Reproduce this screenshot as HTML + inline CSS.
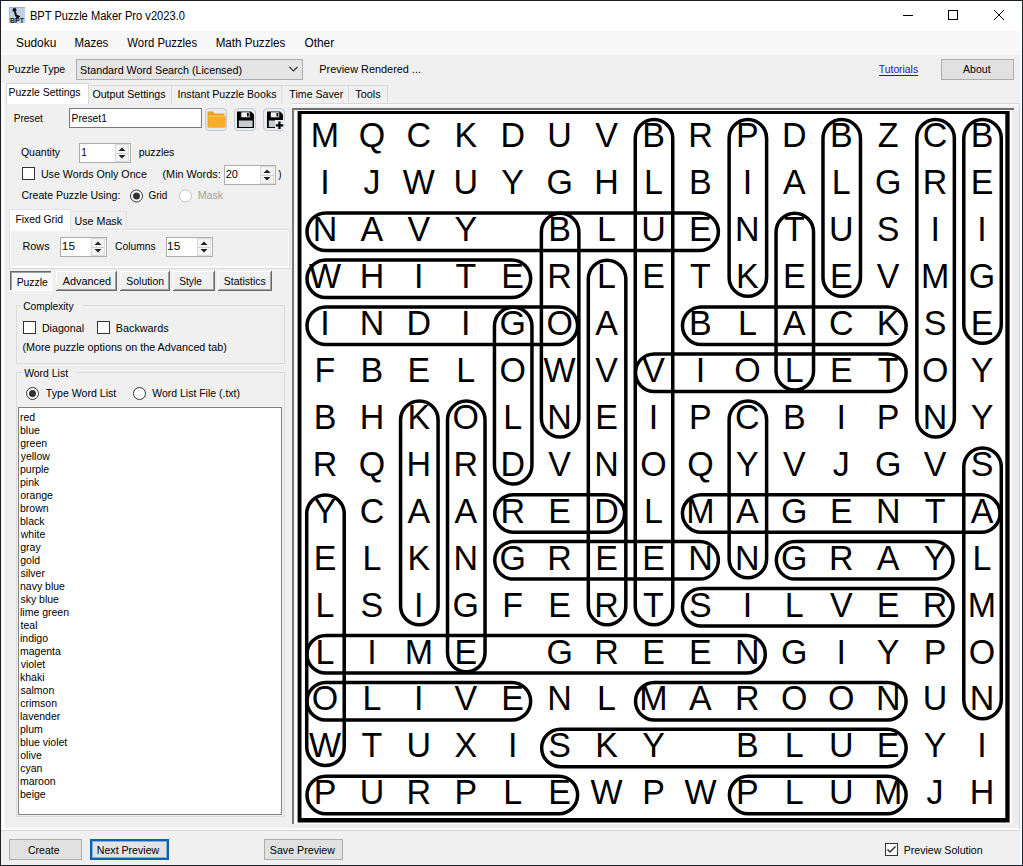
<!DOCTYPE html>
<html><head><meta charset="utf-8"><title>BPT Puzzle Maker Pro</title>
<style>
html,body{margin:0;padding:0;width:1023px;height:866px;overflow:hidden;background:#f0f0f0;}
svg{display:block;}
text{font-family:"Liberation Sans", sans-serif;}
</style></head><body>
<svg width="1023" height="866" viewBox="0 0 1023 866">
<rect x="0" y="0" width="1023" height="866" fill="#f0f0f0"/>
<rect x="0" y="0" width="1023" height="31" fill="#ffffff"/>
<rect x="9" y="7" width="16" height="16" fill="#c3cfe2"/>
<rect x="9" y="7" width="16" height="1" fill="#9fb0c9"/>
<rect x="9" y="7" width="1" height="16" fill="#a8b6cc"/>
<circle cx="14.5" cy="10" r="2" fill="#0c0f14"/>
<path d="M15 12 L16 15.5 L18.5 16.5 L16 19" stroke="#0c0f14" stroke-width="2" fill="none"/>
<text x="10" y="23" font-size="6.5" font-weight="bold" fill="#1a1f2a" textLength="14" lengthAdjust="spacingAndGlyphs">BPT</text>
<text x="29.89" y="19.6" font-size="12" fill="#000" textLength="155.05" lengthAdjust="spacingAndGlyphs">BPT Puzzle Maker Pro v2023.0</text>
<rect x="903" y="15" width="10" height="1" fill="#000"/>
<rect x="948" y="10" width="10" height="10" fill="#000"/>
<rect x="949" y="11" width="8" height="8" fill="#fff"/>
<line x1="994" y1="10" x2="1004" y2="20" stroke="#000" stroke-width="1"/>
<line x1="1004" y1="10" x2="994" y2="20" stroke="#000" stroke-width="1"/>
<rect x="1" y="31" width="1021" height="23" fill="#f7f7f7"/>
<rect x="1" y="53" width="1021" height="2" fill="#f9f9f9"/>
<text x="15.96" y="46.9" font-size="12" fill="#000" textLength="40.33" lengthAdjust="spacingAndGlyphs">Sudoku</text>
<text x="74.46" y="46.9" font-size="12" fill="#000" textLength="33.86" lengthAdjust="spacingAndGlyphs">Mazes</text>
<text x="127.34" y="46.9" font-size="12" fill="#000" textLength="69.78" lengthAdjust="spacingAndGlyphs">Word Puzzles</text>
<text x="215.65" y="46.9" font-size="12" fill="#000" textLength="69.68" lengthAdjust="spacingAndGlyphs">Math Puzzles</text>
<text x="304.45" y="46.9" font-size="12" fill="#000" textLength="29.64" lengthAdjust="spacingAndGlyphs">Other</text>
<text x="7.73" y="72.6" font-size="11" fill="#000" textLength="57.55" lengthAdjust="spacingAndGlyphs">Puzzle Type</text>
<rect x="76" y="59" width="227" height="21" fill="#adadad"/>
<rect x="77" y="60" width="225" height="19" fill="#e5e5e5"/>
<text x="80.11" y="73.5" font-size="11" fill="#000" textLength="161.86" lengthAdjust="spacingAndGlyphs">Standard Word Search (Licensed)</text>
<path d="M289.5 67 L293.5 71 L297.5 67" stroke="#333" stroke-width="1.2" fill="none"/>
<text x="319.31" y="72.6" font-size="11" fill="#000" textLength="101.68" lengthAdjust="spacingAndGlyphs">Preview Rendered ...</text>
<text x="878.87" y="73.4" font-size="11" fill="#1414c8" textLength="39.19" lengthAdjust="spacingAndGlyphs">Tutorials</text>
<rect x="879" y="75" width="39" height="1" fill="#1414c8"/>
<rect x="941" y="59" width="73" height="21" fill="#adadad"/>
<rect x="942" y="60" width="71" height="19" fill="#e1e1e1"/>
<text x="963.08" y="73.4" font-size="11" fill="#000" textLength="27.48" lengthAdjust="spacingAndGlyphs">About</text>
<rect x="6" y="103" width="287" height="1" fill="#d9d9d9"/>
<rect x="88" y="85" width="84" height="20" fill="#d9d9d9"/>
<rect x="89" y="86" width="82" height="18" fill="#f0f0f0"/>
<text x="92.40" y="98.3" font-size="11" fill="#000" textLength="73.19" lengthAdjust="spacingAndGlyphs">Output Settings</text>
<rect x="171" y="85" width="111" height="20" fill="#d9d9d9"/>
<rect x="172" y="86" width="109" height="18" fill="#f0f0f0"/>
<text x="177.52" y="98.3" font-size="11" fill="#000" textLength="98.97" lengthAdjust="spacingAndGlyphs">Instant Puzzle Books</text>
<rect x="281" y="85" width="68" height="20" fill="#d9d9d9"/>
<rect x="282" y="86" width="66" height="18" fill="#f0f0f0"/>
<text x="289.37" y="98.3" font-size="11" fill="#000" textLength="53.91" lengthAdjust="spacingAndGlyphs">Time Saver</text>
<rect x="348" y="85" width="40" height="20" fill="#d9d9d9"/>
<rect x="349" y="86" width="38" height="18" fill="#f0f0f0"/>
<text x="355.26" y="98.3" font-size="11" fill="#000" textLength="25.33" lengthAdjust="spacingAndGlyphs">Tools</text>
<rect x="6" y="83" width="83" height="22" fill="#d9d9d9"/>
<rect x="7" y="84" width="81" height="20" fill="#ffffff"/>
<rect x="7" y="103" width="81" height="2" fill="#ffffff"/>
<text x="8.54" y="96.3" font-size="11" fill="#000" textLength="72.03" lengthAdjust="spacingAndGlyphs">Puzzle Settings</text>
<rect x="6" y="104" width="1" height="724" fill="#e8e8e8"/>
<rect x="7" y="104" width="285" height="724" fill="#f0f0f0"/>
<rect x="1" y="83" width="4" height="746" fill="#fafafa"/>
<text x="13.67" y="121.5" font-size="11" fill="#000" textLength="29.19" lengthAdjust="spacingAndGlyphs">Preset</text>
<rect x="69" y="108" width="133" height="20" fill="#7a7a7a"/>
<rect x="70" y="109" width="131" height="18" fill="#ffffff"/>
<text x="71.56" y="121.5" font-size="11" fill="#000" textLength="35.33" lengthAdjust="spacingAndGlyphs">Preset1</text>
<rect x="205.5" y="108.5" width="21" height="22" rx="3.5" fill="#e9ecef" stroke="#c5cad0"/>
<path d="M207.5 111.5 h5.5 l1.5 2 h10 v14 h-17 z" fill="#f0a020"/>
<path d="M208.5 116 h17.5 l-0.5 11.5 h-17 z" fill="#f7ae2a"/>
<path d="M208.5 116 h17" stroke="#ffd27a" stroke-width="0.8"/>
<rect x="234.5" y="108.5" width="21" height="22" rx="3.5" fill="#e9ecef" stroke="#c5cad0"/>
<path d="M237 111.5 h14 l3 3 v13.5 h-17 z" fill="#000"/>
<rect x="241.3" y="112.3" width="8.4" height="5" fill="#f4f4f4"/>
<rect x="247" y="113" width="1.8" height="3.5" fill="#000"/>
<rect x="238.8" y="120.5" width="13.8" height="6.5" fill="#c9ccd0"/>
<rect x="263.5" y="108.5" width="21" height="22" rx="3.5" fill="#e9ecef" stroke="#c5cad0"/>
<path d="M267 111.5 h13 l3 3 v13.5 h-16 z" fill="#000"/>
<rect x="270.8" y="112.3" width="8.4" height="5" fill="#f4f4f4"/>
<rect x="276.5" y="113" width="1.8" height="3.5" fill="#000"/>
<rect x="268.8" y="120.5" width="12.8" height="6.5" fill="#c9ccd0"/>
<rect x="275" y="120" width="10" height="10" fill="#e9ecef"/>
<path d="M279.5 121.5 v7.5 M275.8 125.3 h7.5" stroke="#000" stroke-width="2.2"/>
<text x="20.90" y="156.2" font-size="11" fill="#000" textLength="39.22" lengthAdjust="spacingAndGlyphs">Quantity</text>
<rect x="79" y="143" width="52" height="20" fill="#adadad"/>
<rect x="80" y="144" width="50" height="18" fill="#ffffff"/>
<text x="81.32" y="156.2" font-size="11" fill="#000" textLength="5.68" lengthAdjust="spacingAndGlyphs">1</text>
<rect x="115" y="144" width="14" height="18" fill="#dadada"/>
<rect x="116" y="145" width="12" height="16" fill="#f4f4f4"/>
<rect x="116" y="153" width="12" height="1" fill="#cfcfcf"/>
<path d="M118.5 151 L122 147.5 L125.5 151 Z" fill="#222"/>
<path d="M118.5 155 L122 158.5 L125.5 155 Z" fill="#222"/>
<text x="138.63" y="156.2" font-size="11" fill="#000" textLength="35.75" lengthAdjust="spacingAndGlyphs">puzzles</text>
<rect x="22" y="167" width="13" height="13" fill="#333333"/>
<rect x="23" y="168" width="11" height="11" fill="#ffffff"/>
<text x="40.88" y="177.8" font-size="11" fill="#000" textLength="106.00" lengthAdjust="spacingAndGlyphs">Use Words Only Once</text>
<text x="162.53" y="177.8" font-size="11" fill="#000" textLength="58.16" lengthAdjust="spacingAndGlyphs">(Min Words:</text>
<rect x="224" y="165" width="52" height="20" fill="#adadad"/>
<rect x="225" y="166" width="50" height="18" fill="#ffffff"/>
<text x="225.74" y="177.8" font-size="11" fill="#000" textLength="12.19" lengthAdjust="spacingAndGlyphs">20</text>
<rect x="260" y="166" width="14" height="18" fill="#dadada"/>
<rect x="261" y="167" width="12" height="16" fill="#f4f4f4"/>
<rect x="261" y="175" width="12" height="1" fill="#cfcfcf"/>
<path d="M263.5 173 L267 169.5 L270.5 173 Z" fill="#222"/>
<path d="M263.5 177 L267 180.5 L270.5 177 Z" fill="#222"/>
<text x="278.33" y="177.8" font-size="11" fill="#000" textLength="3.28" lengthAdjust="spacingAndGlyphs">)</text>
<text x="21.46" y="199.3" font-size="11" fill="#000" textLength="98.90" lengthAdjust="spacingAndGlyphs">Create Puzzle Using:</text>
<circle cx="136.5" cy="196.0" r="6" fill="#fff" stroke="#333333" stroke-width="1"/>
<circle cx="136.5" cy="196.0" r="3.5" fill="#333"/>
<text x="148.49" y="199.3" font-size="11" fill="#000" textLength="18.76" lengthAdjust="spacingAndGlyphs">Grid</text>
<circle cx="185.5" cy="196.0" r="6" fill="#fff" stroke="#c4c4c4" stroke-width="1"/>
<text x="197.63" y="199.3" font-size="11" fill="#a0a0a0" textLength="25.37" lengthAdjust="spacingAndGlyphs">Mask</text>
<rect x="9" y="229" width="281" height="40" fill="#dadada"/>
<rect x="10" y="230" width="279" height="38" fill="#ffffff"/>
<rect x="11" y="231" width="277" height="35" fill="#f0f0f0"/>
<rect x="70" y="211" width="57" height="19" fill="#e3e3e3"/>
<rect x="71" y="212" width="55" height="17" fill="#f0f0f0"/>
<rect x="9" y="209" width="62" height="22" fill="#e3e3e3"/>
<rect x="10" y="210" width="60" height="20" fill="#ffffff"/>
<rect x="10" y="229" width="60" height="2" fill="#ffffff"/>
<text x="15.46" y="222.7" font-size="11" fill="#000" textLength="47.62" lengthAdjust="spacingAndGlyphs">Fixed Grid</text>
<text x="74.59" y="224.6" font-size="11" fill="#000" textLength="47.41" lengthAdjust="spacingAndGlyphs">Use Mask</text>
<text x="22.51" y="249.5" font-size="11" fill="#000" textLength="27.09" lengthAdjust="spacingAndGlyphs">Rows</text>
<rect x="60" y="237" width="47" height="20" fill="#adadad"/>
<rect x="61" y="238" width="45" height="18" fill="#ffffff"/>
<text x="61.89" y="249.5" font-size="11" fill="#000" textLength="13.20" lengthAdjust="spacingAndGlyphs">15</text>
<rect x="91" y="238" width="14" height="18" fill="#dadada"/>
<rect x="92" y="239" width="12" height="16" fill="#f4f4f4"/>
<rect x="92" y="247" width="12" height="1" fill="#cfcfcf"/>
<path d="M94.5 245 L98 241.5 L101.5 245 Z" fill="#222"/>
<path d="M94.5 249 L98 252.5 L101.5 249 Z" fill="#222"/>
<text x="115.08" y="249.5" font-size="11" fill="#000" textLength="40.50" lengthAdjust="spacingAndGlyphs">Columns</text>
<rect x="166" y="237" width="47" height="20" fill="#adadad"/>
<rect x="167" y="238" width="45" height="18" fill="#ffffff"/>
<text x="167.09" y="249.5" font-size="11" fill="#000" textLength="13.20" lengthAdjust="spacingAndGlyphs">15</text>
<rect x="197" y="238" width="14" height="18" fill="#dadada"/>
<rect x="198" y="239" width="12" height="16" fill="#f4f4f4"/>
<rect x="198" y="247" width="12" height="1" fill="#cfcfcf"/>
<path d="M200.5 245 L204 241.5 L207.5 245 Z" fill="#222"/>
<path d="M200.5 249 L204 252.5 L207.5 249 Z" fill="#222"/>
<rect x="10" y="271" width="42" height="20" fill="#f0f0f0"/>
<rect x="10" y="271" width="42" height="1" fill="#696969"/>
<rect x="10" y="271" width="1" height="20" fill="#696969"/>
<rect x="11" y="272" width="40" height="1" fill="#a0a0a0"/>
<rect x="11" y="272" width="1" height="18" fill="#a0a0a0"/>
<rect x="10" y="290" width="42" height="1" fill="#ffffff"/>
<rect x="51" y="271" width="1" height="20" fill="#ffffff"/>
<rect x="12" y="273" width="39" height="17" fill="#f7f7f7"/>
<text x="16.65" y="285.5" font-size="11" fill="#000" textLength="31.22" lengthAdjust="spacingAndGlyphs">Puzzle</text>
<rect x="56" y="271" width="61" height="20" fill="#f0f0f0"/>
<rect x="56" y="271" width="61" height="1" fill="#ffffff"/>
<rect x="56" y="271" width="1" height="20" fill="#ffffff"/>
<rect x="56" y="290" width="61" height="1" fill="#696969"/>
<rect x="116" y="271" width="1" height="20" fill="#696969"/>
<rect x="57" y="289" width="59" height="1" fill="#a0a0a0"/>
<rect x="115" y="272" width="1" height="18" fill="#a0a0a0"/>
<text x="62.68" y="284.5" font-size="11" fill="#000" textLength="48.34" lengthAdjust="spacingAndGlyphs">Advanced</text>
<rect x="120" y="271" width="50" height="20" fill="#f0f0f0"/>
<rect x="120" y="271" width="50" height="1" fill="#ffffff"/>
<rect x="120" y="271" width="1" height="20" fill="#ffffff"/>
<rect x="120" y="290" width="50" height="1" fill="#696969"/>
<rect x="169" y="271" width="1" height="20" fill="#696969"/>
<rect x="121" y="289" width="48" height="1" fill="#a0a0a0"/>
<rect x="168" y="272" width="1" height="18" fill="#a0a0a0"/>
<text x="126.33" y="284.5" font-size="11" fill="#000" textLength="37.65" lengthAdjust="spacingAndGlyphs">Solution</text>
<rect x="173" y="271" width="42" height="20" fill="#f0f0f0"/>
<rect x="173" y="271" width="42" height="1" fill="#ffffff"/>
<rect x="173" y="271" width="1" height="20" fill="#ffffff"/>
<rect x="173" y="290" width="42" height="1" fill="#696969"/>
<rect x="214" y="271" width="1" height="20" fill="#696969"/>
<rect x="174" y="289" width="40" height="1" fill="#a0a0a0"/>
<rect x="213" y="272" width="1" height="18" fill="#a0a0a0"/>
<text x="179.24" y="284.5" font-size="11" fill="#000" textLength="22.62" lengthAdjust="spacingAndGlyphs">Style</text>
<rect x="218" y="271" width="54" height="20" fill="#f0f0f0"/>
<rect x="218" y="271" width="54" height="1" fill="#ffffff"/>
<rect x="218" y="271" width="1" height="20" fill="#ffffff"/>
<rect x="218" y="290" width="54" height="1" fill="#696969"/>
<rect x="271" y="271" width="1" height="20" fill="#696969"/>
<rect x="219" y="289" width="52" height="1" fill="#a0a0a0"/>
<rect x="270" y="272" width="1" height="18" fill="#a0a0a0"/>
<text x="223.82" y="284.5" font-size="11" fill="#000" textLength="42.05" lengthAdjust="spacingAndGlyphs">Statistics</text>
<rect x="16" y="305" width="269" height="59" fill="#dcdcdc"/>
<rect x="17" y="306" width="267" height="57" fill="#f0f0f0"/>
<rect x="22" y="299" width="60" height="12" fill="#f0f0f0"/>
<text x="23.18" y="309.6" font-size="11" fill="#000" textLength="50.34" lengthAdjust="spacingAndGlyphs">Complexity</text>
<rect x="23" y="321" width="13" height="13" fill="#333333"/>
<rect x="24" y="322" width="11" height="11" fill="#ffffff"/>
<text x="41.93" y="331.5" font-size="11" fill="#000" textLength="42.09" lengthAdjust="spacingAndGlyphs">Diagonal</text>
<rect x="97" y="321" width="13" height="13" fill="#333333"/>
<rect x="98" y="322" width="11" height="11" fill="#ffffff"/>
<text x="115.82" y="331.5" font-size="11" fill="#000" textLength="52.77" lengthAdjust="spacingAndGlyphs">Backwards</text>
<text x="22.44" y="350.7" font-size="11" fill="#000" textLength="204.44" lengthAdjust="spacingAndGlyphs">(More puzzle options on the Advanced tab)</text>
<rect x="16" y="372" width="269" height="445" fill="#dcdcdc"/>
<rect x="17" y="373" width="267" height="443" fill="#f0f0f0"/>
<rect x="22" y="366" width="54" height="12" fill="#f0f0f0"/>
<text x="24.14" y="376.8" font-size="11" fill="#000" textLength="43.93" lengthAdjust="spacingAndGlyphs">Word List</text>
<circle cx="32.5" cy="393.5" r="6" fill="#fff" stroke="#333333" stroke-width="1"/>
<circle cx="32.5" cy="393.5" r="3.5" fill="#333"/>
<text x="45.87" y="397.4" font-size="11" fill="#000" textLength="70.41" lengthAdjust="spacingAndGlyphs">Type Word List</text>
<circle cx="139.5" cy="393.5" r="6" fill="#fff" stroke="#333333" stroke-width="1"/>
<text x="152.24" y="397.4" font-size="11" fill="#000" textLength="87.71" lengthAdjust="spacingAndGlyphs">Word List File (.txt)</text>
<rect x="18" y="407" width="264" height="408" fill="#828282"/>
<rect x="19" y="408" width="262" height="406" fill="#ffffff"/>
<text x="19.99" y="420.7" font-size="11" fill="#000" textLength="15.18" lengthAdjust="spacingAndGlyphs">red</text>
<text x="20.01" y="433.7" font-size="11" fill="#000" textLength="19.86" lengthAdjust="spacingAndGlyphs">blue</text>
<text x="20.26" y="446.7" font-size="11" fill="#000" textLength="26.87" lengthAdjust="spacingAndGlyphs">green</text>
<text x="20.66" y="459.7" font-size="11" fill="#000" textLength="29.19" lengthAdjust="spacingAndGlyphs">yellow</text>
<text x="20.03" y="472.7" font-size="11" fill="#000" textLength="29.20" lengthAdjust="spacingAndGlyphs">purple</text>
<text x="20.03" y="485.7" font-size="11" fill="#000" textLength="19.27" lengthAdjust="spacingAndGlyphs">pink</text>
<text x="20.26" y="498.7" font-size="11" fill="#000" textLength="32.71" lengthAdjust="spacingAndGlyphs">orange</text>
<text x="20.01" y="511.7" font-size="11" fill="#000" textLength="28.61" lengthAdjust="spacingAndGlyphs">brown</text>
<text x="20.01" y="524.7" font-size="11" fill="#000" textLength="24.52" lengthAdjust="spacingAndGlyphs">black</text>
<text x="20.72" y="537.7" font-size="11" fill="#000" textLength="24.52" lengthAdjust="spacingAndGlyphs">white</text>
<text x="20.26" y="550.7" font-size="11" fill="#000" textLength="20.44" lengthAdjust="spacingAndGlyphs">gray</text>
<text x="20.26" y="563.7" font-size="11" fill="#000" textLength="19.86" lengthAdjust="spacingAndGlyphs">gold</text>
<text x="20.39" y="576.7" font-size="11" fill="#000" textLength="24.51" lengthAdjust="spacingAndGlyphs">silver</text>
<text x="19.99" y="589.7" font-size="11" fill="#000" textLength="44.97" lengthAdjust="spacingAndGlyphs">navy blue</text>
<text x="20.39" y="602.7" font-size="11" fill="#000" textLength="38.54" lengthAdjust="spacingAndGlyphs">sky blue</text>
<text x="19.99" y="615.7" font-size="11" fill="#000" textLength="49.05" lengthAdjust="spacingAndGlyphs">lime green</text>
<text x="20.55" y="628.7" font-size="11" fill="#000" textLength="16.94" lengthAdjust="spacingAndGlyphs">teal</text>
<text x="19.99" y="641.7" font-size="11" fill="#000" textLength="28.04" lengthAdjust="spacingAndGlyphs">indigo</text>
<text x="19.99" y="654.7" font-size="11" fill="#000" textLength="40.88" lengthAdjust="spacingAndGlyphs">magenta</text>
<text x="20.66" y="667.7" font-size="11" fill="#000" textLength="24.52" lengthAdjust="spacingAndGlyphs">violet</text>
<text x="19.99" y="680.7" font-size="11" fill="#000" textLength="24.52" lengthAdjust="spacingAndGlyphs">khaki</text>
<text x="20.39" y="693.7" font-size="11" fill="#000" textLength="33.86" lengthAdjust="spacingAndGlyphs">salmon</text>
<text x="20.26" y="706.7" font-size="11" fill="#000" textLength="36.77" lengthAdjust="spacingAndGlyphs">crimson</text>
<text x="19.99" y="719.7" font-size="11" fill="#000" textLength="40.30" lengthAdjust="spacingAndGlyphs">lavender</text>
<text x="20.03" y="732.7" font-size="11" fill="#000" textLength="22.77" lengthAdjust="spacingAndGlyphs">plum</text>
<text x="20.01" y="745.7" font-size="11" fill="#000" textLength="47.30" lengthAdjust="spacingAndGlyphs">blue violet</text>
<text x="20.26" y="758.7" font-size="11" fill="#000" textLength="21.61" lengthAdjust="spacingAndGlyphs">olive</text>
<text x="20.26" y="771.7" font-size="11" fill="#000" textLength="22.19" lengthAdjust="spacingAndGlyphs">cyan</text>
<text x="19.99" y="784.7" font-size="11" fill="#000" textLength="35.62" lengthAdjust="spacingAndGlyphs">maroon</text>
<text x="20.01" y="797.7" font-size="11" fill="#000" textLength="25.70" lengthAdjust="spacingAndGlyphs">beige</text>
<rect x="1" y="828" width="1021" height="2" fill="#fbfbfb"/>
<rect x="1" y="830" width="1021" height="1" fill="#d8d8d8"/>
<rect x="9" y="839" width="73" height="21" fill="#adadad"/>
<rect x="10" y="840" width="71" height="19" fill="#e1e1e1"/>
<text x="28.07" y="853.6" font-size="11" fill="#000" textLength="31.40" lengthAdjust="spacingAndGlyphs">Create</text>
<rect x="90" y="839" width="79" height="21" fill="#0a62b4"/>
<rect x="93" y="842" width="73" height="15" fill="#e3e3e3"/>
<rect x="92.5" y="841.5" width="74" height="16" fill="none" stroke="#ffffff" stroke-width="1" stroke-dasharray="1,1"/>
<text x="96.83" y="853.6" font-size="11" fill="#000" textLength="62.34" lengthAdjust="spacingAndGlyphs">Next Preview</text>
<rect x="264" y="839" width="79" height="21" fill="#adadad"/>
<rect x="265" y="840" width="77" height="19" fill="#e1e1e1"/>
<text x="269.82" y="853.6" font-size="11" fill="#000" textLength="65.18" lengthAdjust="spacingAndGlyphs">Save Preview</text>
<rect x="885" y="843" width="13" height="13" fill="#333333"/>
<rect x="886" y="844" width="11" height="11" fill="#ffffff"/>
<path d="M887.5 849.5 L890 852 L895.5 846.5" stroke="#333" stroke-width="1.5" fill="none"/>
<text x="903.73" y="853.5" font-size="11" fill="#000" textLength="78.95" lengthAdjust="spacingAndGlyphs">Preview Solution</text>
<rect x="292" y="103" width="727" height="1" fill="#d8d8d8"/>
<rect x="292" y="104" width="727" height="2" fill="#fbfbfb"/>
<rect x="294" y="110" width="719" height="714" fill="#ffffff"/>
<rect x="1012" y="110" width="7" height="714" fill="#ececec"/>
<rect x="1019" y="104" width="1" height="725" fill="#d9d6d9"/>
<rect x="1020" y="31" width="2" height="834" fill="#fbfbfb"/>
<rect x="294" y="825" width="725" height="3" fill="#eeeeee"/>
<rect x="292" y="108" width="722" height="2" fill="#6f6f6f"/>
<rect x="292" y="108" width="2" height="716" fill="#7a7a7a"/>
<rect x="297.6" y="111" width="712" height="711.5" fill="#000000"/>
<rect x="301.5" y="114" width="703.8" height="704" fill="#ffffff"/>
<text transform="translate(324.97,147.30) scale(1,1.045)" font-size="34" text-anchor="middle">M</text>
<text transform="translate(371.90,147.30) scale(1,1.045)" font-size="34" text-anchor="middle">Q</text>
<text transform="translate(418.83,147.30) scale(1,1.045)" font-size="34" text-anchor="middle">C</text>
<text transform="translate(465.77,147.30) scale(1,1.045)" font-size="34" text-anchor="middle">K</text>
<text transform="translate(512.70,147.30) scale(1,1.045)" font-size="34" text-anchor="middle">D</text>
<text transform="translate(559.63,147.30) scale(1,1.045)" font-size="34" text-anchor="middle">U</text>
<text transform="translate(606.57,147.30) scale(1,1.045)" font-size="34" text-anchor="middle">V</text>
<text transform="translate(653.50,147.30) scale(1,1.045)" font-size="34" text-anchor="middle">B</text>
<text transform="translate(700.43,147.30) scale(1,1.045)" font-size="34" text-anchor="middle">R</text>
<text transform="translate(747.37,147.30) scale(1,1.045)" font-size="34" text-anchor="middle">P</text>
<text transform="translate(794.30,147.30) scale(1,1.045)" font-size="34" text-anchor="middle">D</text>
<text transform="translate(841.23,147.30) scale(1,1.045)" font-size="34" text-anchor="middle">B</text>
<text transform="translate(888.17,147.30) scale(1,1.045)" font-size="34" text-anchor="middle">Z</text>
<text transform="translate(935.10,147.30) scale(1,1.045)" font-size="34" text-anchor="middle">C</text>
<text transform="translate(982.03,147.30) scale(1,1.045)" font-size="34" text-anchor="middle">B</text>
<text transform="translate(324.97,194.23) scale(1,1.045)" font-size="34" text-anchor="middle">I</text>
<text transform="translate(371.90,194.23) scale(1,1.045)" font-size="34" text-anchor="middle">J</text>
<text transform="translate(418.83,194.23) scale(1,1.045)" font-size="34" text-anchor="middle">W</text>
<text transform="translate(465.77,194.23) scale(1,1.045)" font-size="34" text-anchor="middle">U</text>
<text transform="translate(512.70,194.23) scale(1,1.045)" font-size="34" text-anchor="middle">Y</text>
<text transform="translate(559.63,194.23) scale(1,1.045)" font-size="34" text-anchor="middle">G</text>
<text transform="translate(606.57,194.23) scale(1,1.045)" font-size="34" text-anchor="middle">H</text>
<text transform="translate(653.50,194.23) scale(1,1.045)" font-size="34" text-anchor="middle">L</text>
<text transform="translate(700.43,194.23) scale(1,1.045)" font-size="34" text-anchor="middle">B</text>
<text transform="translate(747.37,194.23) scale(1,1.045)" font-size="34" text-anchor="middle">I</text>
<text transform="translate(794.30,194.23) scale(1,1.045)" font-size="34" text-anchor="middle">A</text>
<text transform="translate(841.23,194.23) scale(1,1.045)" font-size="34" text-anchor="middle">L</text>
<text transform="translate(888.17,194.23) scale(1,1.045)" font-size="34" text-anchor="middle">G</text>
<text transform="translate(935.10,194.23) scale(1,1.045)" font-size="34" text-anchor="middle">R</text>
<text transform="translate(982.03,194.23) scale(1,1.045)" font-size="34" text-anchor="middle">E</text>
<text transform="translate(324.97,241.16) scale(1,1.045)" font-size="34" text-anchor="middle">N</text>
<text transform="translate(371.90,241.16) scale(1,1.045)" font-size="34" text-anchor="middle">A</text>
<text transform="translate(418.83,241.16) scale(1,1.045)" font-size="34" text-anchor="middle">V</text>
<text transform="translate(465.77,241.16) scale(1,1.045)" font-size="34" text-anchor="middle">Y</text>
<text transform="translate(559.63,241.16) scale(1,1.045)" font-size="34" text-anchor="middle">B</text>
<text transform="translate(606.57,241.16) scale(1,1.045)" font-size="34" text-anchor="middle">L</text>
<text transform="translate(653.50,241.16) scale(1,1.045)" font-size="34" text-anchor="middle">U</text>
<text transform="translate(700.43,241.16) scale(1,1.045)" font-size="34" text-anchor="middle">E</text>
<text transform="translate(747.37,241.16) scale(1,1.045)" font-size="34" text-anchor="middle">N</text>
<text transform="translate(794.30,241.16) scale(1,1.045)" font-size="34" text-anchor="middle">T</text>
<text transform="translate(841.23,241.16) scale(1,1.045)" font-size="34" text-anchor="middle">U</text>
<text transform="translate(888.17,241.16) scale(1,1.045)" font-size="34" text-anchor="middle">S</text>
<text transform="translate(935.10,241.16) scale(1,1.045)" font-size="34" text-anchor="middle">I</text>
<text transform="translate(982.03,241.16) scale(1,1.045)" font-size="34" text-anchor="middle">I</text>
<text transform="translate(324.97,288.09) scale(1,1.045)" font-size="34" text-anchor="middle">W</text>
<text transform="translate(371.90,288.09) scale(1,1.045)" font-size="34" text-anchor="middle">H</text>
<text transform="translate(418.83,288.09) scale(1,1.045)" font-size="34" text-anchor="middle">I</text>
<text transform="translate(465.77,288.09) scale(1,1.045)" font-size="34" text-anchor="middle">T</text>
<text transform="translate(512.70,288.09) scale(1,1.045)" font-size="34" text-anchor="middle">E</text>
<text transform="translate(559.63,288.09) scale(1,1.045)" font-size="34" text-anchor="middle">R</text>
<text transform="translate(606.57,288.09) scale(1,1.045)" font-size="34" text-anchor="middle">L</text>
<text transform="translate(653.50,288.09) scale(1,1.045)" font-size="34" text-anchor="middle">E</text>
<text transform="translate(700.43,288.09) scale(1,1.045)" font-size="34" text-anchor="middle">T</text>
<text transform="translate(747.37,288.09) scale(1,1.045)" font-size="34" text-anchor="middle">K</text>
<text transform="translate(794.30,288.09) scale(1,1.045)" font-size="34" text-anchor="middle">E</text>
<text transform="translate(841.23,288.09) scale(1,1.045)" font-size="34" text-anchor="middle">E</text>
<text transform="translate(888.17,288.09) scale(1,1.045)" font-size="34" text-anchor="middle">V</text>
<text transform="translate(935.10,288.09) scale(1,1.045)" font-size="34" text-anchor="middle">M</text>
<text transform="translate(982.03,288.09) scale(1,1.045)" font-size="34" text-anchor="middle">G</text>
<text transform="translate(324.97,335.02) scale(1,1.045)" font-size="34" text-anchor="middle">I</text>
<text transform="translate(371.90,335.02) scale(1,1.045)" font-size="34" text-anchor="middle">N</text>
<text transform="translate(418.83,335.02) scale(1,1.045)" font-size="34" text-anchor="middle">D</text>
<text transform="translate(465.77,335.02) scale(1,1.045)" font-size="34" text-anchor="middle">I</text>
<text transform="translate(512.70,335.02) scale(1,1.045)" font-size="34" text-anchor="middle">G</text>
<text transform="translate(559.63,335.02) scale(1,1.045)" font-size="34" text-anchor="middle">O</text>
<text transform="translate(606.57,335.02) scale(1,1.045)" font-size="34" text-anchor="middle">A</text>
<text transform="translate(700.43,335.02) scale(1,1.045)" font-size="34" text-anchor="middle">B</text>
<text transform="translate(747.37,335.02) scale(1,1.045)" font-size="34" text-anchor="middle">L</text>
<text transform="translate(794.30,335.02) scale(1,1.045)" font-size="34" text-anchor="middle">A</text>
<text transform="translate(841.23,335.02) scale(1,1.045)" font-size="34" text-anchor="middle">C</text>
<text transform="translate(888.17,335.02) scale(1,1.045)" font-size="34" text-anchor="middle">K</text>
<text transform="translate(935.10,335.02) scale(1,1.045)" font-size="34" text-anchor="middle">S</text>
<text transform="translate(982.03,335.02) scale(1,1.045)" font-size="34" text-anchor="middle">E</text>
<text transform="translate(324.97,381.95) scale(1,1.045)" font-size="34" text-anchor="middle">F</text>
<text transform="translate(371.90,381.95) scale(1,1.045)" font-size="34" text-anchor="middle">B</text>
<text transform="translate(418.83,381.95) scale(1,1.045)" font-size="34" text-anchor="middle">E</text>
<text transform="translate(465.77,381.95) scale(1,1.045)" font-size="34" text-anchor="middle">L</text>
<text transform="translate(512.70,381.95) scale(1,1.045)" font-size="34" text-anchor="middle">O</text>
<text transform="translate(559.63,381.95) scale(1,1.045)" font-size="34" text-anchor="middle">W</text>
<text transform="translate(606.57,381.95) scale(1,1.045)" font-size="34" text-anchor="middle">V</text>
<text transform="translate(653.50,381.95) scale(1,1.045)" font-size="34" text-anchor="middle">V</text>
<text transform="translate(700.43,381.95) scale(1,1.045)" font-size="34" text-anchor="middle">I</text>
<text transform="translate(747.37,381.95) scale(1,1.045)" font-size="34" text-anchor="middle">O</text>
<text transform="translate(794.30,381.95) scale(1,1.045)" font-size="34" text-anchor="middle">L</text>
<text transform="translate(841.23,381.95) scale(1,1.045)" font-size="34" text-anchor="middle">E</text>
<text transform="translate(888.17,381.95) scale(1,1.045)" font-size="34" text-anchor="middle">T</text>
<text transform="translate(935.10,381.95) scale(1,1.045)" font-size="34" text-anchor="middle">O</text>
<text transform="translate(982.03,381.95) scale(1,1.045)" font-size="34" text-anchor="middle">Y</text>
<text transform="translate(324.97,428.88) scale(1,1.045)" font-size="34" text-anchor="middle">B</text>
<text transform="translate(371.90,428.88) scale(1,1.045)" font-size="34" text-anchor="middle">H</text>
<text transform="translate(418.83,428.88) scale(1,1.045)" font-size="34" text-anchor="middle">K</text>
<text transform="translate(465.77,428.88) scale(1,1.045)" font-size="34" text-anchor="middle">O</text>
<text transform="translate(512.70,428.88) scale(1,1.045)" font-size="34" text-anchor="middle">L</text>
<text transform="translate(559.63,428.88) scale(1,1.045)" font-size="34" text-anchor="middle">N</text>
<text transform="translate(606.57,428.88) scale(1,1.045)" font-size="34" text-anchor="middle">E</text>
<text transform="translate(653.50,428.88) scale(1,1.045)" font-size="34" text-anchor="middle">I</text>
<text transform="translate(700.43,428.88) scale(1,1.045)" font-size="34" text-anchor="middle">P</text>
<text transform="translate(747.37,428.88) scale(1,1.045)" font-size="34" text-anchor="middle">C</text>
<text transform="translate(794.30,428.88) scale(1,1.045)" font-size="34" text-anchor="middle">B</text>
<text transform="translate(841.23,428.88) scale(1,1.045)" font-size="34" text-anchor="middle">I</text>
<text transform="translate(888.17,428.88) scale(1,1.045)" font-size="34" text-anchor="middle">P</text>
<text transform="translate(935.10,428.88) scale(1,1.045)" font-size="34" text-anchor="middle">N</text>
<text transform="translate(982.03,428.88) scale(1,1.045)" font-size="34" text-anchor="middle">Y</text>
<text transform="translate(324.97,475.81) scale(1,1.045)" font-size="34" text-anchor="middle">R</text>
<text transform="translate(371.90,475.81) scale(1,1.045)" font-size="34" text-anchor="middle">Q</text>
<text transform="translate(418.83,475.81) scale(1,1.045)" font-size="34" text-anchor="middle">H</text>
<text transform="translate(465.77,475.81) scale(1,1.045)" font-size="34" text-anchor="middle">R</text>
<text transform="translate(512.70,475.81) scale(1,1.045)" font-size="34" text-anchor="middle">D</text>
<text transform="translate(559.63,475.81) scale(1,1.045)" font-size="34" text-anchor="middle">V</text>
<text transform="translate(606.57,475.81) scale(1,1.045)" font-size="34" text-anchor="middle">N</text>
<text transform="translate(653.50,475.81) scale(1,1.045)" font-size="34" text-anchor="middle">O</text>
<text transform="translate(700.43,475.81) scale(1,1.045)" font-size="34" text-anchor="middle">Q</text>
<text transform="translate(747.37,475.81) scale(1,1.045)" font-size="34" text-anchor="middle">Y</text>
<text transform="translate(794.30,475.81) scale(1,1.045)" font-size="34" text-anchor="middle">V</text>
<text transform="translate(841.23,475.81) scale(1,1.045)" font-size="34" text-anchor="middle">J</text>
<text transform="translate(888.17,475.81) scale(1,1.045)" font-size="34" text-anchor="middle">G</text>
<text transform="translate(935.10,475.81) scale(1,1.045)" font-size="34" text-anchor="middle">V</text>
<text transform="translate(982.03,475.81) scale(1,1.045)" font-size="34" text-anchor="middle">S</text>
<text transform="translate(324.97,522.74) scale(1,1.045)" font-size="34" text-anchor="middle">Y</text>
<text transform="translate(371.90,522.74) scale(1,1.045)" font-size="34" text-anchor="middle">C</text>
<text transform="translate(418.83,522.74) scale(1,1.045)" font-size="34" text-anchor="middle">A</text>
<text transform="translate(465.77,522.74) scale(1,1.045)" font-size="34" text-anchor="middle">A</text>
<text transform="translate(512.70,522.74) scale(1,1.045)" font-size="34" text-anchor="middle">R</text>
<text transform="translate(559.63,522.74) scale(1,1.045)" font-size="34" text-anchor="middle">E</text>
<text transform="translate(606.57,522.74) scale(1,1.045)" font-size="34" text-anchor="middle">D</text>
<text transform="translate(653.50,522.74) scale(1,1.045)" font-size="34" text-anchor="middle">L</text>
<text transform="translate(700.43,522.74) scale(1,1.045)" font-size="34" text-anchor="middle">M</text>
<text transform="translate(747.37,522.74) scale(1,1.045)" font-size="34" text-anchor="middle">A</text>
<text transform="translate(794.30,522.74) scale(1,1.045)" font-size="34" text-anchor="middle">G</text>
<text transform="translate(841.23,522.74) scale(1,1.045)" font-size="34" text-anchor="middle">E</text>
<text transform="translate(888.17,522.74) scale(1,1.045)" font-size="34" text-anchor="middle">N</text>
<text transform="translate(935.10,522.74) scale(1,1.045)" font-size="34" text-anchor="middle">T</text>
<text transform="translate(982.03,522.74) scale(1,1.045)" font-size="34" text-anchor="middle">A</text>
<text transform="translate(324.97,569.67) scale(1,1.045)" font-size="34" text-anchor="middle">E</text>
<text transform="translate(371.90,569.67) scale(1,1.045)" font-size="34" text-anchor="middle">L</text>
<text transform="translate(418.83,569.67) scale(1,1.045)" font-size="34" text-anchor="middle">K</text>
<text transform="translate(465.77,569.67) scale(1,1.045)" font-size="34" text-anchor="middle">N</text>
<text transform="translate(512.70,569.67) scale(1,1.045)" font-size="34" text-anchor="middle">G</text>
<text transform="translate(559.63,569.67) scale(1,1.045)" font-size="34" text-anchor="middle">R</text>
<text transform="translate(606.57,569.67) scale(1,1.045)" font-size="34" text-anchor="middle">E</text>
<text transform="translate(653.50,569.67) scale(1,1.045)" font-size="34" text-anchor="middle">E</text>
<text transform="translate(700.43,569.67) scale(1,1.045)" font-size="34" text-anchor="middle">N</text>
<text transform="translate(747.37,569.67) scale(1,1.045)" font-size="34" text-anchor="middle">N</text>
<text transform="translate(794.30,569.67) scale(1,1.045)" font-size="34" text-anchor="middle">G</text>
<text transform="translate(841.23,569.67) scale(1,1.045)" font-size="34" text-anchor="middle">R</text>
<text transform="translate(888.17,569.67) scale(1,1.045)" font-size="34" text-anchor="middle">A</text>
<text transform="translate(935.10,569.67) scale(1,1.045)" font-size="34" text-anchor="middle">Y</text>
<text transform="translate(982.03,569.67) scale(1,1.045)" font-size="34" text-anchor="middle">L</text>
<text transform="translate(324.97,616.60) scale(1,1.045)" font-size="34" text-anchor="middle">L</text>
<text transform="translate(371.90,616.60) scale(1,1.045)" font-size="34" text-anchor="middle">S</text>
<text transform="translate(418.83,616.60) scale(1,1.045)" font-size="34" text-anchor="middle">I</text>
<text transform="translate(465.77,616.60) scale(1,1.045)" font-size="34" text-anchor="middle">G</text>
<text transform="translate(512.70,616.60) scale(1,1.045)" font-size="34" text-anchor="middle">F</text>
<text transform="translate(559.63,616.60) scale(1,1.045)" font-size="34" text-anchor="middle">E</text>
<text transform="translate(606.57,616.60) scale(1,1.045)" font-size="34" text-anchor="middle">R</text>
<text transform="translate(653.50,616.60) scale(1,1.045)" font-size="34" text-anchor="middle">T</text>
<text transform="translate(700.43,616.60) scale(1,1.045)" font-size="34" text-anchor="middle">S</text>
<text transform="translate(747.37,616.60) scale(1,1.045)" font-size="34" text-anchor="middle">I</text>
<text transform="translate(794.30,616.60) scale(1,1.045)" font-size="34" text-anchor="middle">L</text>
<text transform="translate(841.23,616.60) scale(1,1.045)" font-size="34" text-anchor="middle">V</text>
<text transform="translate(888.17,616.60) scale(1,1.045)" font-size="34" text-anchor="middle">E</text>
<text transform="translate(935.10,616.60) scale(1,1.045)" font-size="34" text-anchor="middle">R</text>
<text transform="translate(982.03,616.60) scale(1,1.045)" font-size="34" text-anchor="middle">M</text>
<text transform="translate(324.97,663.53) scale(1,1.045)" font-size="34" text-anchor="middle">L</text>
<text transform="translate(371.90,663.53) scale(1,1.045)" font-size="34" text-anchor="middle">I</text>
<text transform="translate(418.83,663.53) scale(1,1.045)" font-size="34" text-anchor="middle">M</text>
<text transform="translate(465.77,663.53) scale(1,1.045)" font-size="34" text-anchor="middle">E</text>
<text transform="translate(559.63,663.53) scale(1,1.045)" font-size="34" text-anchor="middle">G</text>
<text transform="translate(606.57,663.53) scale(1,1.045)" font-size="34" text-anchor="middle">R</text>
<text transform="translate(653.50,663.53) scale(1,1.045)" font-size="34" text-anchor="middle">E</text>
<text transform="translate(700.43,663.53) scale(1,1.045)" font-size="34" text-anchor="middle">E</text>
<text transform="translate(747.37,663.53) scale(1,1.045)" font-size="34" text-anchor="middle">N</text>
<text transform="translate(794.30,663.53) scale(1,1.045)" font-size="34" text-anchor="middle">G</text>
<text transform="translate(841.23,663.53) scale(1,1.045)" font-size="34" text-anchor="middle">I</text>
<text transform="translate(888.17,663.53) scale(1,1.045)" font-size="34" text-anchor="middle">Y</text>
<text transform="translate(935.10,663.53) scale(1,1.045)" font-size="34" text-anchor="middle">P</text>
<text transform="translate(982.03,663.53) scale(1,1.045)" font-size="34" text-anchor="middle">O</text>
<text transform="translate(324.97,710.46) scale(1,1.045)" font-size="34" text-anchor="middle">O</text>
<text transform="translate(371.90,710.46) scale(1,1.045)" font-size="34" text-anchor="middle">L</text>
<text transform="translate(418.83,710.46) scale(1,1.045)" font-size="34" text-anchor="middle">I</text>
<text transform="translate(465.77,710.46) scale(1,1.045)" font-size="34" text-anchor="middle">V</text>
<text transform="translate(512.70,710.46) scale(1,1.045)" font-size="34" text-anchor="middle">E</text>
<text transform="translate(559.63,710.46) scale(1,1.045)" font-size="34" text-anchor="middle">N</text>
<text transform="translate(606.57,710.46) scale(1,1.045)" font-size="34" text-anchor="middle">L</text>
<text transform="translate(653.50,710.46) scale(1,1.045)" font-size="34" text-anchor="middle">M</text>
<text transform="translate(700.43,710.46) scale(1,1.045)" font-size="34" text-anchor="middle">A</text>
<text transform="translate(747.37,710.46) scale(1,1.045)" font-size="34" text-anchor="middle">R</text>
<text transform="translate(794.30,710.46) scale(1,1.045)" font-size="34" text-anchor="middle">O</text>
<text transform="translate(841.23,710.46) scale(1,1.045)" font-size="34" text-anchor="middle">O</text>
<text transform="translate(888.17,710.46) scale(1,1.045)" font-size="34" text-anchor="middle">N</text>
<text transform="translate(935.10,710.46) scale(1,1.045)" font-size="34" text-anchor="middle">U</text>
<text transform="translate(982.03,710.46) scale(1,1.045)" font-size="34" text-anchor="middle">N</text>
<text transform="translate(324.97,757.39) scale(1,1.045)" font-size="34" text-anchor="middle">W</text>
<text transform="translate(371.90,757.39) scale(1,1.045)" font-size="34" text-anchor="middle">T</text>
<text transform="translate(418.83,757.39) scale(1,1.045)" font-size="34" text-anchor="middle">U</text>
<text transform="translate(465.77,757.39) scale(1,1.045)" font-size="34" text-anchor="middle">X</text>
<text transform="translate(512.70,757.39) scale(1,1.045)" font-size="34" text-anchor="middle">I</text>
<text transform="translate(559.63,757.39) scale(1,1.045)" font-size="34" text-anchor="middle">S</text>
<text transform="translate(606.57,757.39) scale(1,1.045)" font-size="34" text-anchor="middle">K</text>
<text transform="translate(653.50,757.39) scale(1,1.045)" font-size="34" text-anchor="middle">Y</text>
<text transform="translate(747.37,757.39) scale(1,1.045)" font-size="34" text-anchor="middle">B</text>
<text transform="translate(794.30,757.39) scale(1,1.045)" font-size="34" text-anchor="middle">L</text>
<text transform="translate(841.23,757.39) scale(1,1.045)" font-size="34" text-anchor="middle">U</text>
<text transform="translate(888.17,757.39) scale(1,1.045)" font-size="34" text-anchor="middle">E</text>
<text transform="translate(935.10,757.39) scale(1,1.045)" font-size="34" text-anchor="middle">Y</text>
<text transform="translate(982.03,757.39) scale(1,1.045)" font-size="34" text-anchor="middle">I</text>
<text transform="translate(324.97,804.32) scale(1,1.045)" font-size="34" text-anchor="middle">P</text>
<text transform="translate(371.90,804.32) scale(1,1.045)" font-size="34" text-anchor="middle">U</text>
<text transform="translate(418.83,804.32) scale(1,1.045)" font-size="34" text-anchor="middle">R</text>
<text transform="translate(465.77,804.32) scale(1,1.045)" font-size="34" text-anchor="middle">P</text>
<text transform="translate(512.70,804.32) scale(1,1.045)" font-size="34" text-anchor="middle">L</text>
<text transform="translate(559.63,804.32) scale(1,1.045)" font-size="34" text-anchor="middle">E</text>
<text transform="translate(606.57,804.32) scale(1,1.045)" font-size="34" text-anchor="middle">W</text>
<text transform="translate(653.50,804.32) scale(1,1.045)" font-size="34" text-anchor="middle">P</text>
<text transform="translate(700.43,804.32) scale(1,1.045)" font-size="34" text-anchor="middle">W</text>
<text transform="translate(747.37,804.32) scale(1,1.045)" font-size="34" text-anchor="middle">P</text>
<text transform="translate(794.30,804.32) scale(1,1.045)" font-size="34" text-anchor="middle">L</text>
<text transform="translate(841.23,804.32) scale(1,1.045)" font-size="34" text-anchor="middle">U</text>
<text transform="translate(888.17,804.32) scale(1,1.045)" font-size="34" text-anchor="middle">M</text>
<text transform="translate(935.10,804.32) scale(1,1.045)" font-size="34" text-anchor="middle">J</text>
<text transform="translate(982.03,804.32) scale(1,1.045)" font-size="34" text-anchor="middle">H</text>
<rect x="307.00" y="213.08" width="411.40" height="37.5" rx="18.75" fill="none" stroke="#000" stroke-width="3.5"/>
<rect x="307.00" y="260.02" width="223.67" height="37.5" rx="18.75" fill="none" stroke="#000" stroke-width="3.5"/>
<rect x="307.00" y="306.95" width="270.60" height="37.5" rx="18.75" fill="none" stroke="#000" stroke-width="3.5"/>
<rect x="682.47" y="306.95" width="223.67" height="37.5" rx="18.75" fill="none" stroke="#000" stroke-width="3.5"/>
<rect x="635.53" y="353.88" width="270.60" height="37.5" rx="18.75" fill="none" stroke="#000" stroke-width="3.5"/>
<rect x="494.73" y="494.68" width="129.80" height="37.5" rx="18.75" fill="none" stroke="#000" stroke-width="3.5"/>
<rect x="682.47" y="494.68" width="317.53" height="37.5" rx="18.75" fill="none" stroke="#000" stroke-width="3.5"/>
<rect x="494.73" y="541.62" width="223.67" height="37.5" rx="18.75" fill="none" stroke="#000" stroke-width="3.5"/>
<rect x="776.33" y="541.62" width="176.73" height="37.5" rx="18.75" fill="none" stroke="#000" stroke-width="3.5"/>
<rect x="682.47" y="588.55" width="270.60" height="37.5" rx="18.75" fill="none" stroke="#000" stroke-width="3.5"/>
<rect x="307.00" y="635.48" width="458.33" height="37.5" rx="18.75" fill="none" stroke="#000" stroke-width="3.5"/>
<rect x="307.00" y="682.42" width="223.67" height="37.5" rx="18.75" fill="none" stroke="#000" stroke-width="3.5"/>
<rect x="635.53" y="682.42" width="270.60" height="37.5" rx="18.75" fill="none" stroke="#000" stroke-width="3.5"/>
<rect x="541.67" y="729.35" width="364.47" height="37.5" rx="18.75" fill="none" stroke="#000" stroke-width="3.5"/>
<rect x="307.00" y="776.28" width="270.60" height="37.5" rx="18.75" fill="none" stroke="#000" stroke-width="3.5"/>
<rect x="729.40" y="776.28" width="176.73" height="37.5" rx="18.75" fill="none" stroke="#000" stroke-width="3.5"/>
<rect x="306.72" y="494.97" width="37.5" height="270.60" rx="18.75" fill="none" stroke="#000" stroke-width="3.5"/>
<rect x="400.58" y="401.10" width="37.5" height="223.67" rx="18.75" fill="none" stroke="#000" stroke-width="3.5"/>
<rect x="447.52" y="401.10" width="37.5" height="270.60" rx="18.75" fill="none" stroke="#000" stroke-width="3.5"/>
<rect x="494.45" y="307.23" width="37.5" height="176.73" rx="18.75" fill="none" stroke="#000" stroke-width="3.5"/>
<rect x="541.38" y="213.37" width="37.5" height="223.67" rx="18.75" fill="none" stroke="#000" stroke-width="3.5"/>
<rect x="588.32" y="260.30" width="37.5" height="364.47" rx="18.75" fill="none" stroke="#000" stroke-width="3.5"/>
<rect x="635.25" y="119.50" width="37.5" height="505.27" rx="18.75" fill="none" stroke="#000" stroke-width="3.5"/>
<rect x="729.12" y="119.50" width="37.5" height="176.73" rx="18.75" fill="none" stroke="#000" stroke-width="3.5"/>
<rect x="729.12" y="401.10" width="37.5" height="176.73" rx="18.75" fill="none" stroke="#000" stroke-width="3.5"/>
<rect x="776.05" y="213.37" width="37.5" height="176.73" rx="18.75" fill="none" stroke="#000" stroke-width="3.5"/>
<rect x="822.98" y="119.50" width="37.5" height="176.73" rx="18.75" fill="none" stroke="#000" stroke-width="3.5"/>
<rect x="916.85" y="119.50" width="37.5" height="317.53" rx="18.75" fill="none" stroke="#000" stroke-width="3.5"/>
<rect x="963.78" y="119.50" width="37.5" height="223.67" rx="18.75" fill="none" stroke="#000" stroke-width="3.5"/>
<rect x="963.78" y="448.03" width="37.5" height="270.60" rx="18.75" fill="none" stroke="#000" stroke-width="3.5"/>
<rect x="0" y="0" width="1023" height="1" fill="#1b1f26"/>
<rect x="0" y="0" width="1" height="866" fill="#1b1f26"/>
<rect x="1022" y="0" width="1" height="866" fill="#1b2530"/>
<rect x="0" y="865" width="1023" height="1" fill="#1b1f26"/>
</svg>
</body></html>
